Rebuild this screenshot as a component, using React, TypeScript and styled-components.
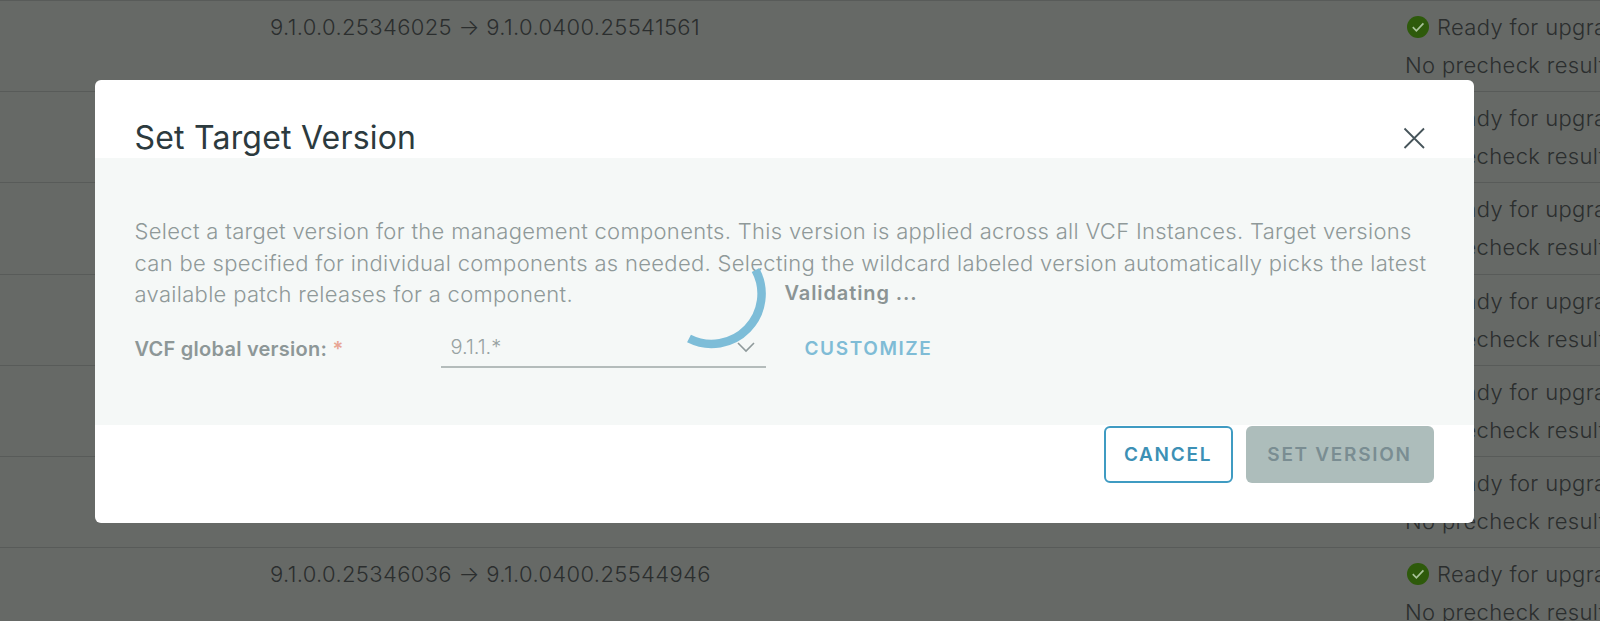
import React from "react";
import styled, { createGlobalStyle } from "styled-components";

const Global = createGlobalStyle`
  html, body { margin: 0; padding: 0; height: 100%; overflow: hidden; background: #666966; }
  body { font-family: Inter, "Liberation Sans", sans-serif; }
  #root { height: 100%; }
  * { box-sizing: border-box; }
`;

const Page = styled.div`
  position: relative;
  width: 1600px;
  height: 621px;
  overflow: hidden;
  background: #666966;
  color: #2b2e2e;
`;

const Row = styled.div`
  display: grid;
  grid-template-columns: 270px 1135px 1fr;
  height: 91.2px;
  border-top: 1.5px solid #585b59;
  padding-top: 12px;
  font-size: 22px;
  line-height: 28px;
  letter-spacing: 0.35px;
`;

const Version = styled.div`
  grid-column: 2;
  white-space: nowrap;
  font-weight: 300;
`;

const Status = styled.div`
  grid-column: 3;
  white-space: nowrap;
  display: flex;
  flex-direction: column;
  gap: 10px;
  font-weight: 300;
`;

const Ready = styled.div`
  display: flex;
  align-items: center;
  gap: 8px;
  padding-left: 2px;
`;

const Scrim = styled.div`
  position: absolute;
  left: 94.5px;
  top: 80px;
  width: 1379px;
  height: 443px;
  background: #fff;
  border-radius: 6px;
  display: flex;
  flex-direction: column;
`;

const Header = styled.div`
  height: 78px;
  display: flex;
  align-items: flex-start;
  justify-content: space-between;
  padding: 39px 48px 0 40px;
`;

const Title = styled.h2`
  margin: 0;
  font-size: 32px;
  line-height: 38px;
  font-weight: 400;
  color: #2c3a3e;
  letter-spacing: 0.2px;
`;

const Close = styled.button`
  border: 0;
  background: none;
  padding: 0;
  width: 24px;
  height: 24px;
  margin-top: 7px;
  color: #46545a;
`;

const Body = styled.div`
  position: relative;
  height: 267px;
  background: #f5f8f7;
  padding: 58px 40px 0;
`;

const Description = styled.p`
  margin: 0;
  font-size: 22px;
  line-height: 31.6px;
  font-weight: 300;
  letter-spacing: 0.31px;
  color: #8f9999;
  white-space: pre-line;
`;

const FormRow = styled.div`
  display: flex;
  align-items: center;
  margin-top: 16px;
  height: 44px;
`;

const Label = styled.label`
  width: 306px;
  font-size: 20px;
  font-weight: 600;
  letter-spacing: 0.25px;
  color: #8d9797;
`;

const Required = styled.span`
  color: #e8a594;
`;

const Select = styled.div`
  width: 325px;
  height: 38px;
  border-bottom: 2px solid #b4bcbb;
  padding: 0 10px 2px;
  display: flex;
  align-items: center;
  justify-content: space-between;
  font-size: 20px;
  font-weight: 300;
  color: #98a2a2;
`;

const Chevron = styled.svg`
  width: 20px;
  height: 12px;
`;

const Customize = styled.span`
  margin-left: 39px;
  font-size: 19px;
  font-weight: 600;
  letter-spacing: 1.6px;
  color: #7fbcd6;
`;

const Spinner = styled.svg`
  position: absolute;
  left: 556px;
  top: 76px;
  width: 120px;
  height: 120px;
`;

const Validating = styled.span`
  position: absolute;
  left: 690px;
  top: 122px;
  font-size: 20px;
  line-height: 26px;
  font-weight: 600;
  letter-spacing: 0.9px;
  color: #8b9494;
`;

const Footer = styled.div`
  display: flex;
  justify-content: flex-end;
  gap: 13px;
  padding: 1px 40px 0 0;
`;

const Button = styled.button<{ $primary?: boolean }>`
  height: 57px;
  width: ${(p) => (p.$primary ? "188px" : "129px")};
  border-radius: 6px;
  border: ${(p) => (p.$primary ? "0" : "2px solid #3f9bc2")};
  background: ${(p) => (p.$primary ? "#adbdbb" : "#fff")};
  color: ${(p) => (p.$primary ? "#7a8d92" : "#3c90b5")};
  font-family: inherit;
  font-size: 19px;
  font-weight: 600;
  letter-spacing: 1.7px;
`;

function ReadyIcon() {
  return (
    <svg width="22" height="22" viewBox="0 0 22 22">
      <circle cx="11" cy="11" r="11" fill="#2e5a0b" />
      <path d="M5.8 11.2l3.6 3.6 7-7.4" fill="none" stroke="#a9c39a" strokeWidth="1.7" />
    </svg>
  );
}

const versions = [
  "9.1.0.0.25346025 → 9.1.0.0400.25541561",
  "",
  "",
  "",
  "",
  "",
  "9.1.0.0.25346036 → 9.1.0.0400.25544946",
];

export default function App() {
  return (
    <Page>
      <Global />
      {versions.map((version, i) => (
        <Row key={i}>
          <Version>{version}</Version>
          <Status>
            <Ready>
              <ReadyIcon />
              Ready for upgrade
            </Ready>
            <span>No precheck results</span>
          </Status>
        </Row>
      ))}
      <Scrim>
        <Header>
          <Title>Set Target Version</Title>
          <Close aria-label="Close">
            <svg width="24" height="24" viewBox="0 0 24 24">
              <path d="M2.5 2.5l19.5 19.5M22 2.5L2.5 22" stroke="currentColor" strokeWidth="1.8" fill="none" />
            </svg>
          </Close>
        </Header>
        <Body>
          <Description>
            {"Select a target version for the management components. This version is applied across all VCF Instances. Target versions\ncan be specified for individual components as needed. Selecting the wildcard labeled version automatically picks the latest\navailable patch releases for a component."}
          </Description>
          <FormRow>
            <Label>
              VCF global version: <Required>*</Required>
            </Label>
            <Select>
              9.1.1.*
              <Chevron viewBox="0 0 20 12">
                <path d="M2 2l8 8 8-8" fill="none" stroke="#8f9a9b" strokeWidth="1.6" />
              </Chevron>
            </Select>
            <Customize>CUSTOMIZE</Customize>
          </FormRow>
          <Spinner viewBox="0 0 120 120">
            <path d="M104.5 36A50 50 0 0 1 38 104.5" fill="none" stroke="#7dbdd8" strokeWidth="8.5" />
          </Spinner>
          <Validating>Validating ...</Validating>
        </Body>
        <Footer>
          <Button>CANCEL</Button>
          <Button $primary>SET VERSION</Button>
        </Footer>
      </Scrim>
    </Page>
  );
}
